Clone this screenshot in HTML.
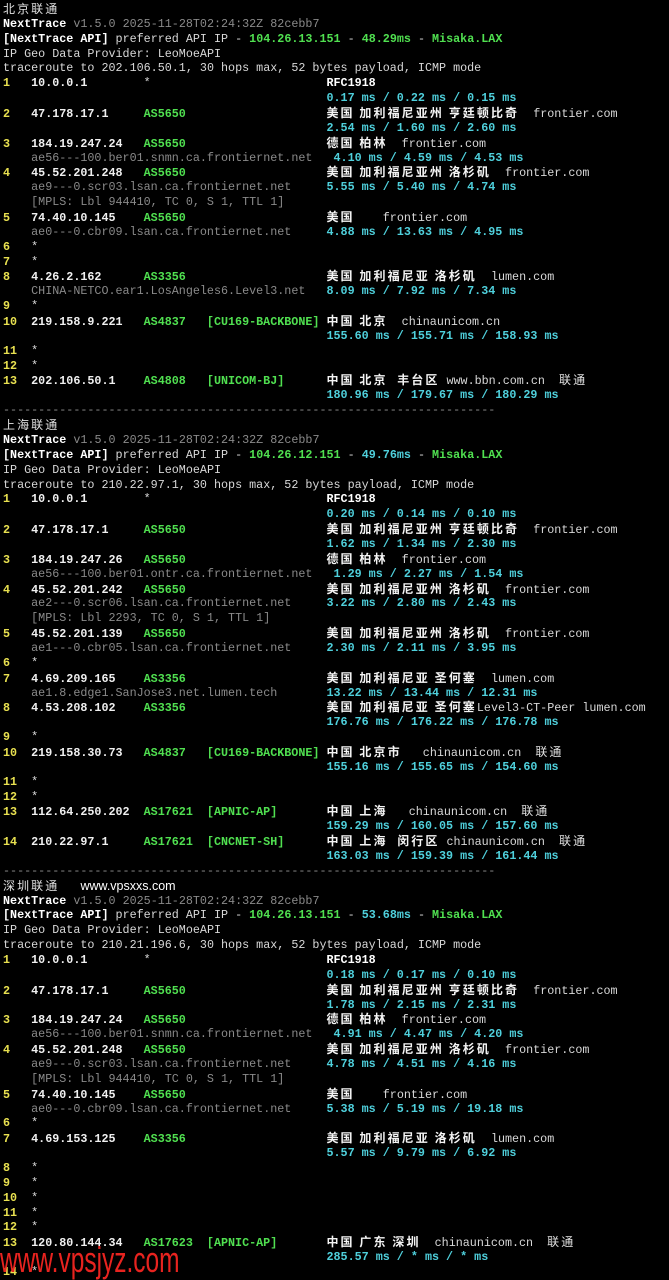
<!DOCTYPE html>
<html><head><meta charset="utf-8"><style>
html,body{margin:0;padding:0;background:#000;width:669px;height:1280px;overflow:hidden}
#t{position:absolute;left:3px;top:2px;font-family:"Liberation Mono",monospace;font-size:11.73px;line-height:14.87px;color:#d8d8d8}
.l{height:14.87px;white-space:pre;overflow:visible}
i{font-style:normal;display:inline-block}
.h{width:4ch;color:#e8e050;font-weight:bold}
.ip{width:16ch;color:#f0f0f0;font-weight:bold}
.as{width:9ch;color:#50e050;font-weight:bold}
.as2{width:26ch;color:#50e050;font-weight:bold}
.br{width:17ch;color:#50e050;font-weight:bold}
.sp{width:46ch}
.g{color:#8a8a8a}
.gh{display:inline-block;width:42ch;color:#8a8a8a}
.w{color:#fff;font-weight:bold}
.gr{color:#50e050;font-weight:bold}
.c{color:#4fd0dc;font-weight:bold}
.k{font-family:"Noto Sans CJK SC","WenQuanYi Zen Hei",sans-serif;font-size:12px;letter-spacing:2.08px;font-weight:bold;color:#f4f4f4;line-height:14px}
.kn{font-family:"Noto Sans CJK SC","WenQuanYi Zen Hei",sans-serif;font-size:12px;letter-spacing:2.08px;color:#e0e0e0;line-height:14px}
.wm{position:absolute;left:0;top:1242px;font-family:"Liberation Sans",sans-serif;font-size:36px;line-height:1;color:#e8231f;transform:scaleX(0.68);transform-origin:0 0;white-space:nowrap}
</style></head><body>
<div id="t">
<div class="l"><span class="kn">北京联通</span></div>
<div class="l"><span class="w">NextTrace</span> <span class="g">v1.5.0 2025-11-28T02:24:32Z 82cebb7</span></div>
<div class="l"><span class="w">[NextTrace API]</span> preferred API IP - <span class="gr">104.26.13.151</span> - <span class="gr">48.29ms</span> - <span class="gr">Misaka.LAX</span></div>
<div class="l">IP Geo Data Provider: LeoMoeAPI</div>
<div class="l">traceroute to 202.106.50.1, 30 hops max, 52 bytes payload, ICMP mode</div>
<div class="l"><i class="h">1</i><i class="ip">10.0.0.1</i><i class="as2" style="color:#d8d8d8;font-weight:normal">*</i><span class="w">RFC1918</span></div>
<div class="l"><i class="sp"></i><span class="c">0.17 ms / 0.22 ms / 0.15 ms</span></div>
<div class="l"><i class="h">2</i><i class="ip">47.178.17.1</i><i class="as2">AS5650</i><span class="k">美国 加利福尼亚州 亨廷顿比奇</span>  frontier.com</div>
<div class="l"><i class="sp"></i><span class="c">2.54 ms / 1.60 ms / 2.60 ms</span></div>
<div class="l"><i class="h">3</i><i class="ip">184.19.247.24</i><i class="as2">AS5650</i><span class="k">德国 柏林</span>  frontier.com</div>
<div class="l"><i class="h"></i><span class="gh">ae56---100.ber01.snmn.ca.frontiernet.net</span><span class="c"> 4.10 ms / 4.59 ms / 4.53 ms</span></div>
<div class="l"><i class="h">4</i><i class="ip">45.52.201.248</i><i class="as2">AS5650</i><span class="k">美国 加利福尼亚州 洛杉矶</span>  frontier.com</div>
<div class="l"><i class="h"></i><span class="gh">ae9---0.scr03.lsan.ca.frontiernet.net</span><span class="c">5.55 ms / 5.40 ms / 4.74 ms</span></div>
<div class="l"><i class="h"></i><span class="g">[MPLS: Lbl 944410, TC 0, S 1, TTL 1]</span></div>
<div class="l"><i class="h">5</i><i class="ip">74.40.10.145</i><i class="as2">AS5650</i><span class="k">美国</span>    frontier.com</div>
<div class="l"><i class="h"></i><span class="gh">ae0---0.cbr09.lsan.ca.frontiernet.net</span><span class="c">4.88 ms / 13.63 ms / 4.95 ms</span></div>
<div class="l"><i class="h">6</i>*</div>
<div class="l"><i class="h">7</i>*</div>
<div class="l"><i class="h">8</i><i class="ip">4.26.2.162</i><i class="as2">AS3356</i><span class="k">美国 加利福尼亚 洛杉矶</span>  lumen.com</div>
<div class="l"><i class="h"></i><span class="gh">CHINA-NETCO.ear1.LosAngeles6.Level3.net</span><span class="c">8.09 ms / 7.92 ms / 7.34 ms</span></div>
<div class="l"><i class="h">9</i>*</div>
<div class="l"><i class="h">10</i><i class="ip">219.158.9.221</i><i class="as">AS4837</i><i class="br">[CU169-BACKBONE]</i><span class="k">中国 北京</span>  chinaunicom.cn</div>
<div class="l"><i class="sp"></i><span class="c">155.60 ms / 155.71 ms / 158.93 ms</span></div>
<div class="l"><i class="h">11</i>*</div>
<div class="l"><i class="h">12</i>*</div>
<div class="l"><i class="h">13</i><i class="ip">202.106.50.1</i><i class="as">AS4808</i><i class="br">[UNICOM-BJ]</i><span class="k">中国 北京  丰台区</span> www.bbn.com.cn  <span class="kn">联通</span></div>
<div class="l"><i class="sp"></i><span class="c">180.96 ms / 179.67 ms / 180.29 ms</span></div>
<div class="l g">----------------------------------------------------------------------</div>
<div class="l"><span class="kn">上海联通</span></div>
<div class="l"><span class="w">NextTrace</span> <span class="g">v1.5.0 2025-11-28T02:24:32Z 82cebb7</span></div>
<div class="l"><span class="w">[NextTrace API]</span> preferred API IP - <span class="gr">104.26.12.151</span> - <span class="c">49.76ms</span> - <span class="gr">Misaka.LAX</span></div>
<div class="l">IP Geo Data Provider: LeoMoeAPI</div>
<div class="l">traceroute to 210.22.97.1, 30 hops max, 52 bytes payload, ICMP mode</div>
<div class="l"><i class="h">1</i><i class="ip">10.0.0.1</i><i class="as2" style="color:#d8d8d8;font-weight:normal">*</i><span class="w">RFC1918</span></div>
<div class="l"><i class="sp"></i><span class="c">0.20 ms / 0.14 ms / 0.10 ms</span></div>
<div class="l"><i class="h">2</i><i class="ip">47.178.17.1</i><i class="as2">AS5650</i><span class="k">美国 加利福尼亚州 亨廷顿比奇</span>  frontier.com</div>
<div class="l"><i class="sp"></i><span class="c">1.62 ms / 1.34 ms / 2.30 ms</span></div>
<div class="l"><i class="h">3</i><i class="ip">184.19.247.26</i><i class="as2">AS5650</i><span class="k">德国 柏林</span>  frontier.com</div>
<div class="l"><i class="h"></i><span class="gh">ae56---100.ber01.ontr.ca.frontiernet.net</span><span class="c"> 1.29 ms / 2.27 ms / 1.54 ms</span></div>
<div class="l"><i class="h">4</i><i class="ip">45.52.201.242</i><i class="as2">AS5650</i><span class="k">美国 加利福尼亚州 洛杉矶</span>  frontier.com</div>
<div class="l"><i class="h"></i><span class="gh">ae2---0.scr06.lsan.ca.frontiernet.net</span><span class="c">3.22 ms / 2.80 ms / 2.43 ms</span></div>
<div class="l"><i class="h"></i><span class="g">[MPLS: Lbl 2293, TC 0, S 1, TTL 1]</span></div>
<div class="l"><i class="h">5</i><i class="ip">45.52.201.139</i><i class="as2">AS5650</i><span class="k">美国 加利福尼亚州 洛杉矶</span>  frontier.com</div>
<div class="l"><i class="h"></i><span class="gh">ae1---0.cbr05.lsan.ca.frontiernet.net</span><span class="c">2.30 ms / 2.11 ms / 3.95 ms</span></div>
<div class="l"><i class="h">6</i>*</div>
<div class="l"><i class="h">7</i><i class="ip">4.69.209.165</i><i class="as2">AS3356</i><span class="k">美国 加利福尼亚 圣何塞</span>  lumen.com</div>
<div class="l"><i class="h"></i><span class="gh">ae1.8.edge1.SanJose3.net.lumen.tech</span><span class="c">13.22 ms / 13.44 ms / 12.31 ms</span></div>
<div class="l"><i class="h">8</i><i class="ip">4.53.208.102</i><i class="as2">AS3356</i><span class="k">美国 加利福尼亚 圣何塞</span>Level3-CT-Peer lumen.com</div>
<div class="l"><i class="sp"></i><span class="c">176.76 ms / 176.22 ms / 176.78 ms</span></div>
<div class="l"><i class="h">9</i>*</div>
<div class="l"><i class="h">10</i><i class="ip">219.158.30.73</i><i class="as">AS4837</i><i class="br">[CU169-BACKBONE]</i><span class="k">中国 北京市</span>   chinaunicom.cn  <span class="kn">联通</span></div>
<div class="l"><i class="sp"></i><span class="c">155.16 ms / 155.65 ms / 154.60 ms</span></div>
<div class="l"><i class="h">11</i>*</div>
<div class="l"><i class="h">12</i>*</div>
<div class="l"><i class="h">13</i><i class="ip">112.64.250.202</i><i class="as">AS17621</i><i class="br">[APNIC-AP]</i><span class="k">中国 上海</span>   chinaunicom.cn  <span class="kn">联通</span></div>
<div class="l"><i class="sp"></i><span class="c">159.29 ms / 160.05 ms / 157.60 ms</span></div>
<div class="l"><i class="h">14</i><i class="ip">210.22.97.1</i><i class="as">AS17621</i><i class="br">[CNCNET-SH]</i><span class="k">中国 上海  闵行区</span> chinaunicom.cn  <span class="kn">联通</span></div>
<div class="l"><i class="sp"></i><span class="c">163.03 ms / 159.39 ms / 161.44 ms</span></div>
<div class="l g">----------------------------------------------------------------------</div>
<div class="l"><span class="kn">深圳联通</span>   <span style="font-family:'Liberation Sans',sans-serif;font-size:12.5px;color:#fff">www.vpsxxs.com</span></div>
<div class="l"><span class="w">NextTrace</span> <span class="g">v1.5.0 2025-11-28T02:24:32Z 82cebb7</span></div>
<div class="l"><span class="w">[NextTrace API]</span> preferred API IP - <span class="gr">104.26.13.151</span> - <span class="c">53.68ms</span> - <span class="gr">Misaka.LAX</span></div>
<div class="l">IP Geo Data Provider: LeoMoeAPI</div>
<div class="l">traceroute to 210.21.196.6, 30 hops max, 52 bytes payload, ICMP mode</div>
<div class="l"><i class="h">1</i><i class="ip">10.0.0.1</i><i class="as2" style="color:#d8d8d8;font-weight:normal">*</i><span class="w">RFC1918</span></div>
<div class="l"><i class="sp"></i><span class="c">0.18 ms / 0.17 ms / 0.10 ms</span></div>
<div class="l"><i class="h">2</i><i class="ip">47.178.17.1</i><i class="as2">AS5650</i><span class="k">美国 加利福尼亚州 亨廷顿比奇</span>  frontier.com</div>
<div class="l"><i class="sp"></i><span class="c">1.78 ms / 2.15 ms / 2.31 ms</span></div>
<div class="l"><i class="h">3</i><i class="ip">184.19.247.24</i><i class="as2">AS5650</i><span class="k">德国 柏林</span>  frontier.com</div>
<div class="l"><i class="h"></i><span class="gh">ae56---100.ber01.snmn.ca.frontiernet.net</span><span class="c"> 4.91 ms / 4.47 ms / 4.20 ms</span></div>
<div class="l"><i class="h">4</i><i class="ip">45.52.201.248</i><i class="as2">AS5650</i><span class="k">美国 加利福尼亚州 洛杉矶</span>  frontier.com</div>
<div class="l"><i class="h"></i><span class="gh">ae9---0.scr03.lsan.ca.frontiernet.net</span><span class="c">4.78 ms / 4.51 ms / 4.16 ms</span></div>
<div class="l"><i class="h"></i><span class="g">[MPLS: Lbl 944410, TC 0, S 1, TTL 1]</span></div>
<div class="l"><i class="h">5</i><i class="ip">74.40.10.145</i><i class="as2">AS5650</i><span class="k">美国</span>    frontier.com</div>
<div class="l"><i class="h"></i><span class="gh">ae0---0.cbr09.lsan.ca.frontiernet.net</span><span class="c">5.38 ms / 5.19 ms / 19.18 ms</span></div>
<div class="l"><i class="h">6</i>*</div>
<div class="l"><i class="h">7</i><i class="ip">4.69.153.125</i><i class="as2">AS3356</i><span class="k">美国 加利福尼亚 洛杉矶</span>  lumen.com</div>
<div class="l"><i class="sp"></i><span class="c">5.57 ms / 9.79 ms / 6.92 ms</span></div>
<div class="l"><i class="h">8</i>*</div>
<div class="l"><i class="h">9</i>*</div>
<div class="l"><i class="h">10</i>*</div>
<div class="l"><i class="h">11</i>*</div>
<div class="l"><i class="h">12</i>*</div>
<div class="l"><i class="h">13</i><i class="ip">120.80.144.34</i><i class="as">AS17623</i><i class="br">[APNIC-AP]</i><span class="k">中国 广东 深圳</span>  chinaunicom.cn  <span class="kn">联通</span></div>
<div class="l"><i class="sp"></i><span class="c">285.57 ms / * ms / * ms</span></div>
<div class="l"><i class="h">14</i>*</div>
</div>
<div class="wm">www.vpsjyz.com</div>
</body></html>
